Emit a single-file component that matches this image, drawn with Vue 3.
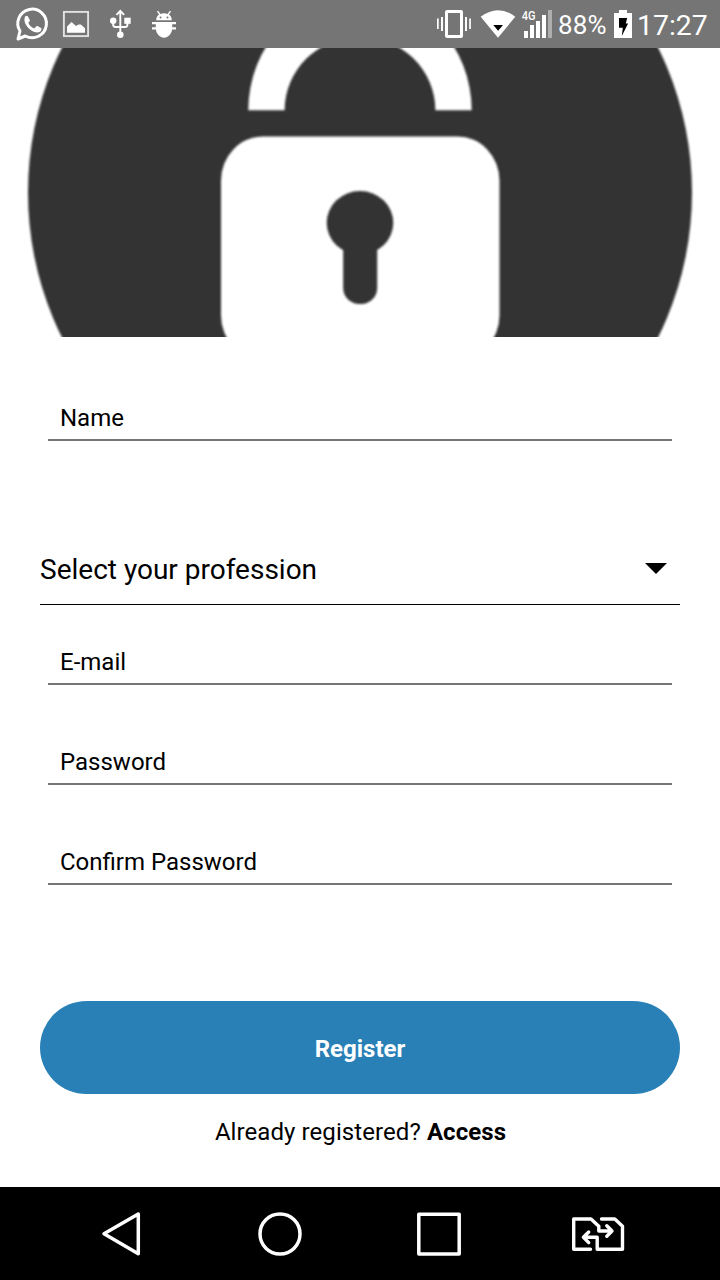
<script setup>
const credentials = ['E-mail', 'Password', 'Confirm Password']
</script>

<template>
  <div class="screen">
    <header class="status">
      <svg class="left-icons" width="190" height="48" viewBox="0 0 190 48" fill="none">
        <path d="M18 39l2-8A14.300 14.300 0 1 1 25.300 36z" stroke="#fff" stroke-width="3" stroke-linejoin="round" />
        <path d="M25.300 16.200c.8-.7 1.900-.8 2.500.1l2 3.700c.4.800-.4 1.500-1.500 2.700 1.200 2.800 3.200 4.600 6 5.700l2.100-2.200c.5-.4 1-.3 1.500 0l3.200 1.700c1.100.7-.1 3.300-1.200 3.900-6.700 3.400-18.800-8-14.600-15.600z" fill="#fff" />
        <rect x="63.900" y="11.900" width="24.200" height="24.200" stroke="#e2e2e2" stroke-width="1.900" />
        <path d="M67 32.700v-6.200l4.500-4.600 4.500 4 2.500-1.400h2.300l4.200 3.800v4.400z" fill="#fff" />
        <path d="M120.300 34V11M116.500 14.800l3.800-4 3.800 4M113.200 21v3.800q0 2.200 2.200 2.200h9.800q2.200 0 2.200-2.200V21" stroke="#fff" stroke-width="1.900" />
        <circle cx="113.200" cy="20.700" r="3.200" fill="#fff" />
        <rect x="124.300" y="17.700" width="6.400" height="6.100" fill="#fff" />
        <circle cx="120.300" cy="34.700" r="3.300" fill="#fff" />
        <path d="M156.200 20.300c0-2.500 1.100-4.500 2.900-5.700l-2.200-3 1.200-.8 2.400 3.100c2.200-.8 4.800-.8 7 0l2.400-3.100 1.200.8-2.200 3c1.800 1.200 2.900 3.200 2.900 5.700z" fill="#fff" />
        <circle cx="160.500" cy="17.400" r="1" fill="#757575" />
        <circle cx="167.500" cy="17.400" r="1" fill="#757575" />
        <path d="M152 22h24v2.200h-3.800v3h3.800v2.400h-3.900c-.6 4.600-4 8.100-8.100 8.100s-7.500-3.500-8.100-8.100H152v-2.400h3.800v-3H152z" fill="#fff" />
      </svg>
      <div class="right">
        <svg width="116" height="48" viewBox="436 0 116 48">
          <path d="M437 18.500h1.700v10.500H437zM441 17h2v14h-2zM465 17h2v14h-2zM469.200 18.500h1.700v10.500h-1.700z" fill="#fff" />
          <rect x="446.500" y="11.500" width="15" height="25" rx=".6" fill="none" stroke="#fff" stroke-width="3" />
          <path d="M480.700 16.700q17.300-13 34.600 0L498 37.800z" fill="#fff" />
          <path d="M493.300 25h9.700l-4.900 5.800z" fill="#000" />
          <path d="M524 31h4v7h-4zM530 25h4v13h-4zM536 21h4v17h-4zM542 15h4v23h-4z" fill="#fff" />
          <path d="M548 10h4v28h-4z" fill="#aeaeae" />
          <text class="network" x="521.700" y="20" textLength="13.800" lengthAdjust="spacingAndGlyphs">4G</text>
        </svg>
        <span class="percent">88%</span>
        <svg width="18" height="28" viewBox="0 0 18 28">
          <path d="M5 0h8v3h5v25H0V3h5z" fill="#fff" />
          <path d="M5 8h8.200l-1.400 5.600h2.300L7.800 26l1-8.300H5z" fill="#000" />
        </svg>
        <span class="clock">17:27</span>
      </div>
    </header>

    <svg class="hero" width="720" height="289" viewBox="0 48 720 289">
      <defs>
        <filter id="soften" filterUnits="userSpaceOnUse" x="0" y="-160" width="720" height="700" color-interpolation-filters="sRGB">
          <feGaussianBlur stdDeviation="0.800" />
        </filter>
      </defs>
      <g filter="url(#soften)">
        <ellipse cx="360" cy="192.500" rx="332" ry="329" fill="#333" />
        <path d="M248.300 110.300A111.700 117.500 0 0 1 471.700 110.300H435.400A75.400 73.500 0 0 0 284.600 110.300z" fill="#fff" />
        <rect x="221" y="136.500" width="278.500" height="223" rx="42" ry="44" fill="#fff" />
        <ellipse cx="360" cy="222.800" rx="33.300" ry="31.800" fill="#333" />
        <rect x="343.200" y="235" width="34" height="69" rx="16" fill="#333" />
      </g>
    </svg>

    <main class="form">
      <div class="field name">Name</div>
      <div class="select">
        <span>Select your profession</span>
        <svg width="22" height="11" viewBox="0 0 22 11"><path d="M0 0h22L11 11z" /></svg>
      </div>
      <div v-for="label in credentials" :key="label" class="field">{{ label }}</div>
      <button class="register">Register</button>
      <p class="access">Already registered? <b>Access</b></p>
    </main>

    <nav class="nav">
      <svg width="720" height="93" viewBox="0 1187 720 93" fill="none" stroke="#fff" stroke-width="3.500" stroke-linejoin="round" stroke-linecap="round">
        <path d="M138.300 1214v39.700L104 1233.800z" />
        <circle cx="280" cy="1234" r="20" />
        <path d="M418.800 1214.300h40.400v39.700h-40.400z" />
        <path stroke-width="3.400" d="M590.500 1249.300h-16.800v-30.300h17.300l7.800 7.200v4.800h12.500M606.800 1225.800l5.200 5.200-5.200 5.200M601.500 1219h13.300l7.700 7.200v23.100h-25.300v-12h-13M588.700 1232l-5.300 5.300 5.300 5.300" />
      </svg>
    </nav>
  </div>
</template>

<style>
body {
  margin: 0;
}
</style>

<style scoped>
.screen {
  width: 720px;
  height: 1280px;
  display: flex;
  flex-direction: column;
  overflow: hidden;
  background: #fff;
  color: #000;
  font-family: Roboto, "Liberation Sans", sans-serif;
}
svg {
  display: block;
  flex: none;
}
.status {
  height: 48px;
  flex: none;
  display: flex;
  justify-content: space-between;
  background: #757575;
  color: #fff;
}
.right {
  display: flex;
  align-items: center;
  width: 284px;
  line-height: 48px;
}
.network {
  font: 500 12.5px Roboto, sans-serif;
  fill: #fff;
}
.percent {
  width: 56px;
  margin-left: 6px;
  font-size: 26px;
  letter-spacing: 0.2px;
  padding-top: 2px;
}
.clock {
  margin-left: 5px;
  font-size: 28.4px;
  padding-top: 4px;
}
.form {
  flex: 1;
  display: flex;
  flex-direction: column;
  padding: 0 40px;
}
.field {
  height: 46px;
  margin: 0 8px 54px;
  padding-left: 12px;
  box-sizing: border-box;
  border-bottom: 2px solid #757575;
  font-size: 24px;
  line-height: 46px;
}
.name {
  margin-top: 58px;
  margin-bottom: 94px;
}
.select {
  height: 70px;
  box-sizing: border-box;
  margin-bottom: 34px;
  padding-right: 13px;
  display: flex;
  align-items: center;
  justify-content: space-between;
  border-bottom: 1px solid #000;
  font-size: 28px;
}
.select svg {
  margin-bottom: 2px;
}
.register {
  height: 93px;
  flex: none;
  margin: 62px 0 0;
  padding: 3px 0 0;
  border: 0;
  border-radius: 47px;
  background: #2980b6;
  color: #fff;
  font: 700 24px Roboto, sans-serif;
}
.access {
  margin: 24px 0 0;
  padding-left: 1px;
  font-size: 24px;
  line-height: 28px;
  letter-spacing: 0.08px;
  text-align: center;
}
.nav {
  height: 93px;
  flex: none;
  background: #000;
}
</style>
